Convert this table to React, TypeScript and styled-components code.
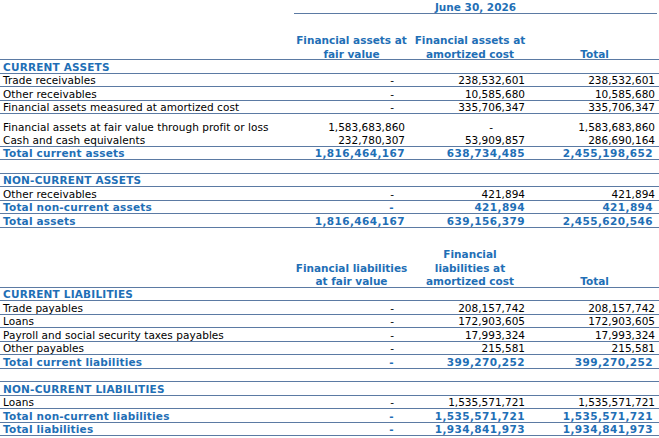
import React from "react";
import styled, { createGlobalStyle } from "styled-components";

const Global = createGlobalStyle`
  html, body { margin: 0; padding: 0; background: #ffffff; }
  body { font-family: "DejaVu Sans", Verdana, sans-serif; }
`;

const BLUE = "#1f6fb6";
const LINE = "#5b7aa3";
const COLS = "293px 117px 120px 129px";

const Sheet = styled.div`
  width: 659px;
  font-family: "DejaVu Sans", Verdana, sans-serif;
  font-size: 10.5px;
  color: #000;
`;

const HeaderBlock = styled.div`
  display: grid;
  grid-template-columns: ${COLS};
  grid-template-rows: 14px 1fr;
  height: 60px;
  box-sizing: border-box;
  border-bottom: 1px solid ${LINE};
`;

const DateCell = styled.div`
  grid-column: 2 / 5;
  grid-row: 1;
  margin: 0 2px 0 1px;
  padding-top: 1px;
  border-bottom: 1px solid ${LINE};
  text-align: center;
  color: ${BLUE};
  font-weight: bold;
  line-height: 12px;
`;

const HeadCell = styled.div<{ $col: number }>`
  grid-column: ${(p) => p.$col};
  grid-row: 2;
  align-self: end;
  margin-bottom: -2px;
  text-align: center;
  color: ${BLUE};
  font-weight: bold;
  line-height: 13.5px;
  white-space: pre-line;
`;

const Row = styled.div<{ $tall?: boolean; $noLine?: boolean }>`
  display: grid;
  grid-template-columns: ${COLS};
  align-items: end;
  height: ${(p) => (p.$tall ? "19px" : "13.5px")};
  box-sizing: border-box;
  border-bottom: ${(p) => (p.$noLine ? "none" : `1px solid ${LINE}`)};
  line-height: 11px;
`;

const Label = styled.div<{ $strong?: boolean }>`
  padding-left: 3px;
  white-space: nowrap;
  color: ${(p) => (p.$strong ? BLUE : "#000")};
  font-weight: ${(p) => (p.$strong ? "bold" : "normal")};
  letter-spacing: ${(p) => (p.$strong ? "0.2px" : "0.05px")};
`;

const Num = styled.div<{ $strong?: boolean; $pad: number }>`
  text-align: right;
  padding-right: ${(p) => p.$pad}px;
  white-space: nowrap;
  color: ${(p) => (p.$strong ? BLUE : "#000")};
  font-weight: ${(p) => (p.$strong ? "bold" : "normal")};
  letter-spacing: ${(p) => (p.$strong ? "0.4px" : "0")};
`;

type Kind = "section" | "item" | "total" | "blank";
type Line = {
  kind: Kind;
  label?: string;
  v?: [string, string, string];
  tall?: boolean;
  noLine?: boolean;
};

const NUM_PAD = [5, 5, 4];
const BOLD_PAD = [5, 5, 6];
const DASH_PAD = [16, 37, 16];

const assets: Line[] = [
  { kind: "section", label: "CURRENT ASSETS" },
  { kind: "item", label: "Trade receivables", v: ["-", "238,532,601", "238,532,601"] },
  { kind: "item", label: "Other receivables", v: ["-", "10,585,680", "10,585,680"] },
  { kind: "item", label: "Financial assets measured at amortized cost", v: ["-", "335,706,347", "335,706,347"] },
  {
    kind: "item",
    label: "Financial assets at fair value through profit or loss",
    v: ["1,583,683,860", "-", "1,583,683,860"],
    tall: true,
    noLine: true,
  },
  { kind: "item", label: "Cash and cash equivalents", v: ["232,780,307", "53,909,857", "286,690,164"] },
  { kind: "total", label: "Total current assets", v: ["1,816,464,167", "638,734,485", "2,455,198,652"] },
  { kind: "blank" },
  { kind: "section", label: "NON-CURRENT ASSETS" },
  { kind: "item", label: "Other receivables", v: ["-", "421,894", "421,894"] },
  { kind: "total", label: "Total non-current assets", v: ["-", "421,894", "421,894"] },
  { kind: "total", label: "Total assets", v: ["1,816,464,167", "639,156,379", "2,455,620,546"] },
];

const liabilities: Line[] = [
  { kind: "section", label: "CURRENT LIABILITIES" },
  { kind: "item", label: "Trade payables", v: ["-", "208,157,742", "208,157,742"] },
  { kind: "item", label: "Loans", v: ["-", "172,903,605", "172,903,605"] },
  { kind: "item", label: "Payroll and social security taxes payables", v: ["-", "17,993,324", "17,993,324"] },
  { kind: "item", label: "Other payables", v: ["-", "215,581", "215,581"] },
  { kind: "total", label: "Total current liabilities", v: ["-", "399,270,252", "399,270,252"] },
  { kind: "blank" },
  { kind: "section", label: "NON-CURRENT LIABILITIES" },
  { kind: "item", label: "Loans", v: ["-", "1,535,571,721", "1,535,571,721"] },
  { kind: "total", label: "Total non-current liabilities", v: ["-", "1,535,571,721", "1,535,571,721"] },
  { kind: "total", label: "Total liabilities", v: ["-", "1,934,841,973", "1,934,841,973"] },
];

function Rows({ lines }: { lines: Line[] }) {
  return (
    <>
      {lines.map((l, i) => {
        const strong = l.kind === "section" || l.kind === "total";
        const total = l.kind === "total";
        return (
          <Row key={i} $tall={l.tall} $noLine={l.noLine}>
            <Label $strong={strong}>{l.label ?? ""}</Label>
            {[0, 1, 2].map((c) => {
              const val = l.v ? l.v[c] : "";
              const pad = val === "-" ? DASH_PAD[c] : total ? BOLD_PAD[c] : NUM_PAD[c];
              return (
                <Num key={c} $strong={total} $pad={pad}>
                  {val}
                </Num>
              );
            })}
          </Row>
        );
      })}
    </>
  );
}

export default function App() {
  return (
    <>
      <Global />
      <Sheet>
        <HeaderBlock>
          <DateCell>June 30, 2026</DateCell>
          <HeadCell $col={2}>{"Financial assets at\nfair value"}</HeadCell>
          <HeadCell $col={3}>{"Financial assets at\namortized cost"}</HeadCell>
          <HeadCell $col={4}>Total</HeadCell>
        </HeaderBlock>
        <Rows lines={assets} />
        <HeaderBlock>
          <HeadCell $col={2}>{"Financial liabilities\nat fair value"}</HeadCell>
          <HeadCell $col={3}>{"Financial\nliabilities at\namortized cost"}</HeadCell>
          <HeadCell $col={4}>Total</HeadCell>
        </HeaderBlock>
        <Rows lines={liabilities} />
      </Sheet>
    </>
  );
}
